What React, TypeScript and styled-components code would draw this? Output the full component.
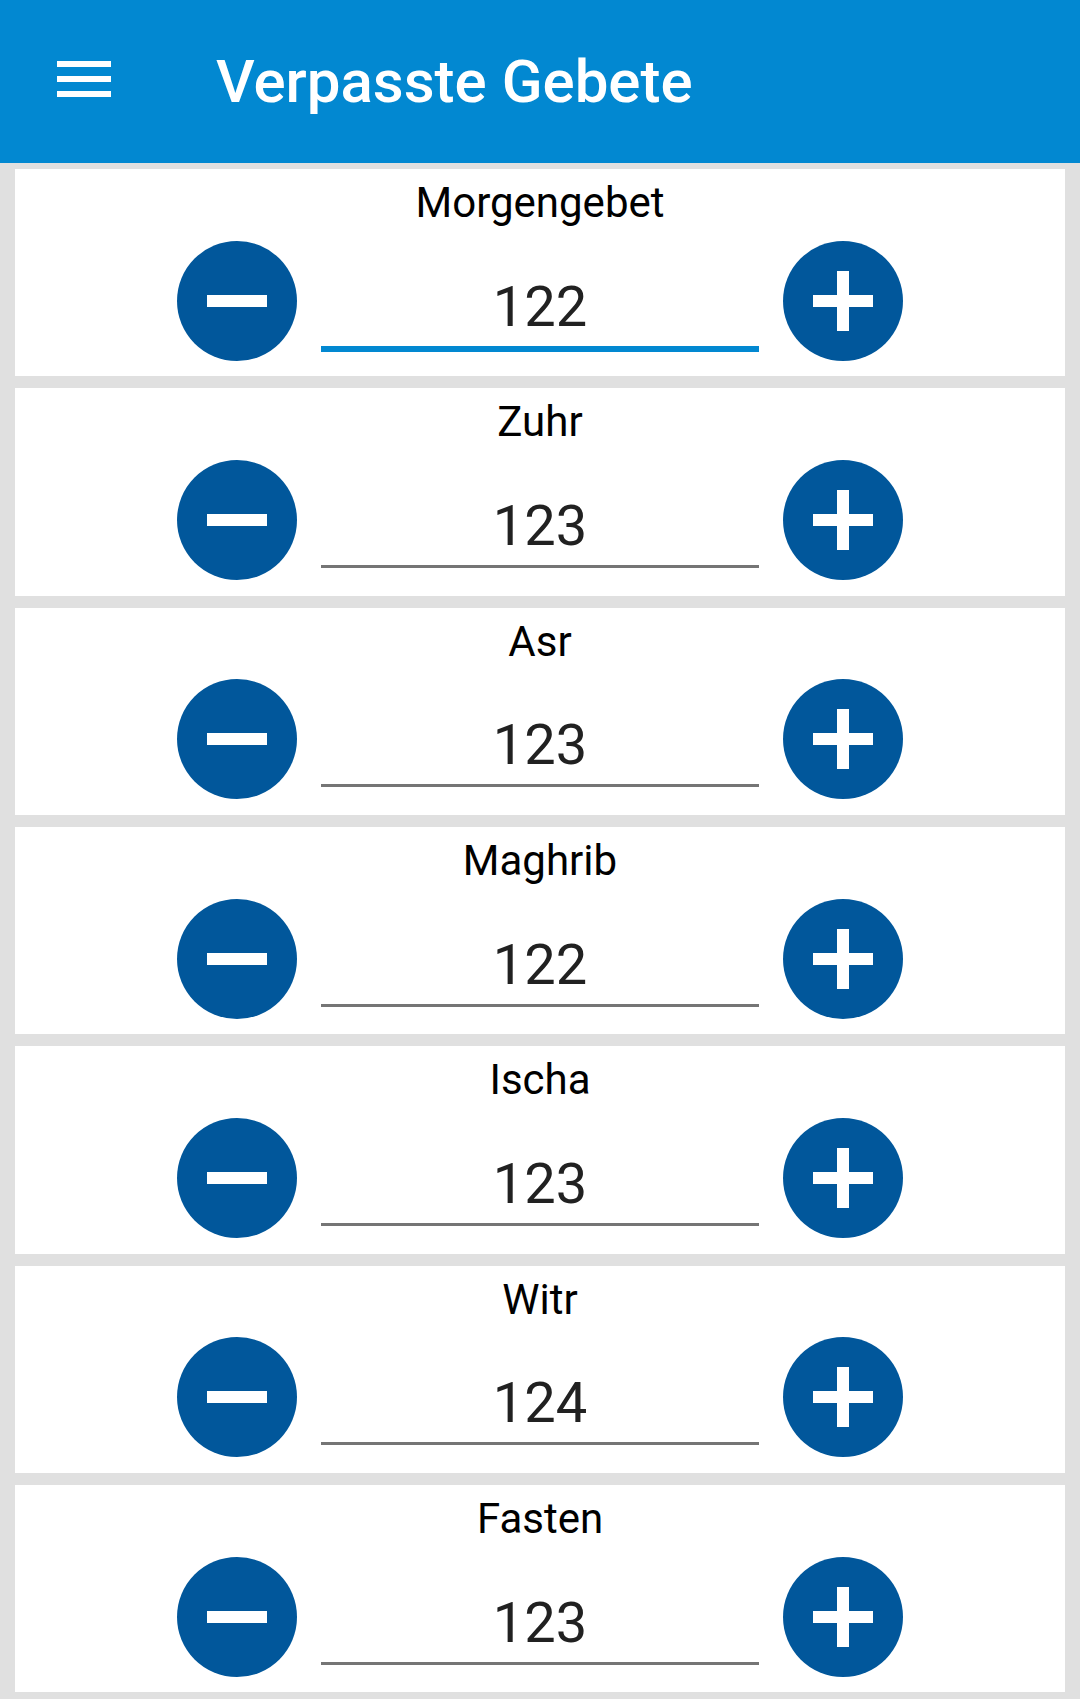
import React from "react";
import styled, { createGlobalStyle } from "styled-components";

const GlobalStyle = createGlobalStyle`
  html, body {
    margin: 0;
    padding: 0;
    background: #e0e0e0;
  }
  body {
    font-family: Roboto, "Noto Sans", "Liberation Sans", sans-serif;
  }
  * { box-sizing: border-box; }
`;

const Page = styled.div`
  width: 1080px;
  min-height: 1699px;
  background: #e0e0e0;
`;

const AppBar = styled.header`
  height: 163px;
  background: #0288d1;
  display: flex;
  align-items: center;
`;

const MenuIcon = styled.div`
  align-self: flex-start;
  margin-top: 61px;
  margin-left: 57px;
  width: 54px;
  display: flex;
  flex-direction: column;
  gap: 9px;
`;

const MenuBar = styled.span`
  display: block;
  height: 6px;
  background: #ffffff;
`;

const Title = styled.h1`
  margin: 0 0 0 105px;
  font-family: Roboto, "Noto Sans", sans-serif;
  font-size: 60px;
  font-weight: 500;
  color: #ffffff;
  line-height: normal;
`;

const List = styled.main`
  display: flex;
  flex-direction: column;
  gap: 12px;
  padding: 6px 15px 6px 15px;
`;

const Card = styled.section`
  height: 207.33px;
  background: #ffffff;
  display: flex;
  flex-direction: column;
  align-items: center;
  padding-top: 10px;
`;

const Label = styled.div`
  font-family: Roboto, "Noto Sans", sans-serif;
  font-size: 42px;
  line-height: 48px;
  color: #000000;
`;

const Row = styled.div`
  margin-top: 13.7px;
  height: 120px;
  display: flex;
  align-items: flex-start;
  gap: 24px;
`;

const RoundButton = styled.button`
  width: 120px;
  height: 120px;
  border-radius: 50%;
  border: none;
  padding: 0;
  background: #01579b;
  display: flex;
  align-items: center;
  justify-content: center;
  cursor: pointer;
`;

const NumberField = styled.div<{ $focused?: boolean }>`
  margin-top: 27px;
  width: 438px;
  height: ${(p) => (p.$focused ? 84 : 81)}px;
  line-height: 78px;
  box-sizing: border-box;
  border-bottom: ${(p) => (p.$focused ? "6px solid #0288d1" : "3px solid #757575")};
  text-align: center;
  font-family: Roboto, "Noto Sans", sans-serif;
  font-size: 56px;
  color: #212121;
`;

const SignIcon = ({ plus }: { plus?: boolean }) => (
  <svg width="120" height="120" viewBox="0 0 120 120" aria-hidden="true">
    <rect x="30" y="54" width="60" height="12" fill="#ffffff" />
    {plus && <rect x="54" y="30" width="12" height="60" fill="#ffffff" />}
  </svg>
);

const items = [
  { label: "Morgengebet", value: 122, focused: true },
  { label: "Zuhr", value: 123 },
  { label: "Asr", value: 123 },
  { label: "Maghrib", value: 122 },
  { label: "Ischa", value: 123 },
  { label: "Witr", value: 124 },
  { label: "Fasten", value: 123 },
];

export default function App() {
  return (
    <Page>
      <GlobalStyle />
      <AppBar>
        <MenuIcon>
          <MenuBar />
          <MenuBar />
          <MenuBar />
        </MenuIcon>
        <Title>Verpasste Gebete</Title>
      </AppBar>
      <List>
        {items.map((it) => (
          <Card key={it.label}>
            <Label>{it.label}</Label>
            <Row>
              <RoundButton aria-label="minus">
                <SignIcon />
              </RoundButton>
              <NumberField $focused={it.focused}>{it.value}</NumberField>
              <RoundButton aria-label="plus">
                <SignIcon plus />
              </RoundButton>
            </Row>
          </Card>
        ))}
      </List>
    </Page>
  );
}
